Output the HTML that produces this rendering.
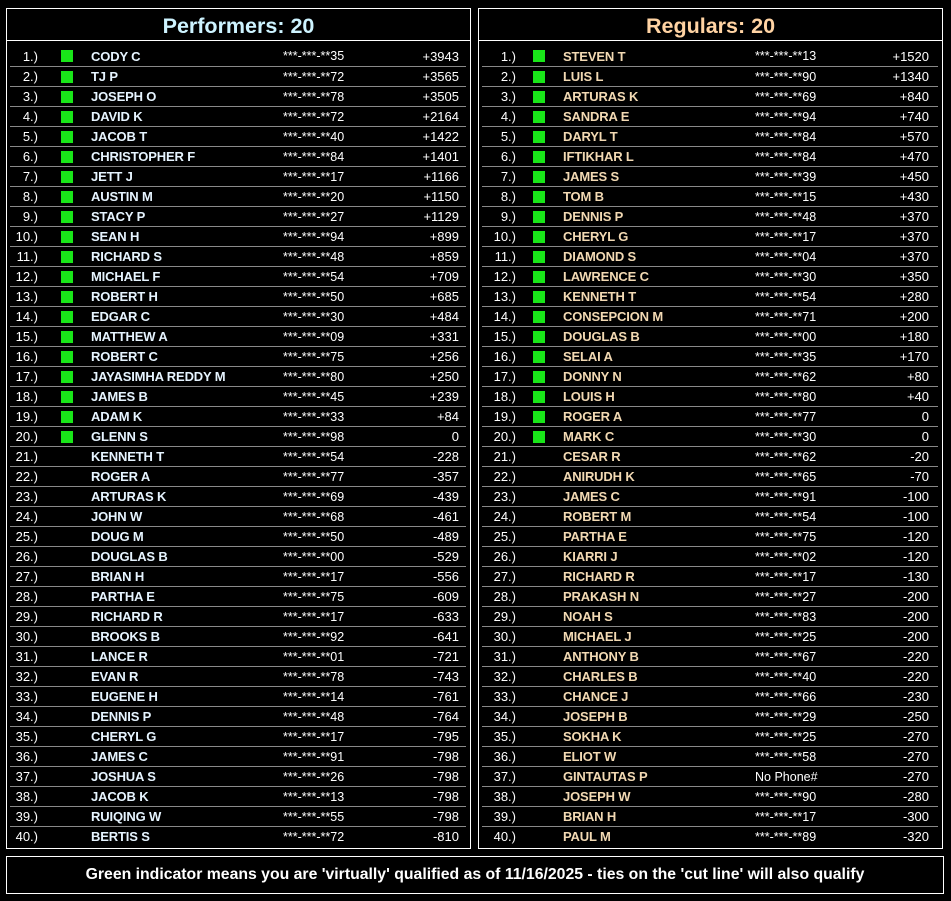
<!DOCTYPE html>
<html><head><meta charset="utf-8"><style>
*{margin:0;padding:0;box-sizing:border-box}
body{width:951px;height:901px;background:#000;position:relative;overflow:hidden;font-family:"Liberation Sans",Arial,sans-serif;color:#fff}
.p{position:absolute;top:8px;width:465px;height:841px;border:1px solid #fff}
.t{height:32px;border-bottom:1px solid #fff;text-align:center;font-weight:bold;font-size:21.5px;line-height:34px}
.rows{position:absolute;top:37px;left:3px;width:456px}
.r{height:20px;display:flex;align-items:center;font-size:13px;border-top:1px solid #888}
.r:first-child{border-top:none}
.n{width:30px;text-align:right;padding-right:2px}
.s{width:51px}
.s i{display:block;width:12px;height:12px;background:#19e619;margin-left:21px}
.m{width:192px;font-weight:bold;letter-spacing:-0.15px}
.ph{width:117px;font-size:12.5px}
.sc{width:62px;text-align:right;padding-right:3px}
#L{left:6px}#L .m{color:#e6f4ff}#L .t{color:#cdf3ff}
#R{left:478px}#R .m{color:#f2d9b3}#R .t{color:#ffd3a3}
#R .n{width:36px}#R .s{width:45px}#R .s i{margin-left:15px}#R .sc{width:62px;padding-right:5px}
.f{position:absolute;left:6px;top:856px;width:938px;height:38px;border:1px solid #fff;text-align:center;font-weight:bold;font-size:15.8px;line-height:36px}
</style></head><body>
<div class="p" id="L"><div class="t">Performers: 20</div><div class="rows">
<div class="r"><span class="n">1.)</span><span class="s"><i></i></span><span class="m">CODY C</span><span class="ph">***-***-**35</span><span class="sc">+3943</span></div>
<div class="r"><span class="n">2.)</span><span class="s"><i></i></span><span class="m">TJ P</span><span class="ph">***-***-**72</span><span class="sc">+3565</span></div>
<div class="r"><span class="n">3.)</span><span class="s"><i></i></span><span class="m">JOSEPH O</span><span class="ph">***-***-**78</span><span class="sc">+3505</span></div>
<div class="r"><span class="n">4.)</span><span class="s"><i></i></span><span class="m">DAVID K</span><span class="ph">***-***-**72</span><span class="sc">+2164</span></div>
<div class="r"><span class="n">5.)</span><span class="s"><i></i></span><span class="m">JACOB T</span><span class="ph">***-***-**40</span><span class="sc">+1422</span></div>
<div class="r"><span class="n">6.)</span><span class="s"><i></i></span><span class="m">CHRISTOPHER F</span><span class="ph">***-***-**84</span><span class="sc">+1401</span></div>
<div class="r"><span class="n">7.)</span><span class="s"><i></i></span><span class="m">JETT J</span><span class="ph">***-***-**17</span><span class="sc">+1166</span></div>
<div class="r"><span class="n">8.)</span><span class="s"><i></i></span><span class="m">AUSTIN M</span><span class="ph">***-***-**20</span><span class="sc">+1150</span></div>
<div class="r"><span class="n">9.)</span><span class="s"><i></i></span><span class="m">STACY P</span><span class="ph">***-***-**27</span><span class="sc">+1129</span></div>
<div class="r"><span class="n">10.)</span><span class="s"><i></i></span><span class="m">SEAN H</span><span class="ph">***-***-**94</span><span class="sc">+899</span></div>
<div class="r"><span class="n">11.)</span><span class="s"><i></i></span><span class="m">RICHARD S</span><span class="ph">***-***-**48</span><span class="sc">+859</span></div>
<div class="r"><span class="n">12.)</span><span class="s"><i></i></span><span class="m">MICHAEL F</span><span class="ph">***-***-**54</span><span class="sc">+709</span></div>
<div class="r"><span class="n">13.)</span><span class="s"><i></i></span><span class="m">ROBERT H</span><span class="ph">***-***-**50</span><span class="sc">+685</span></div>
<div class="r"><span class="n">14.)</span><span class="s"><i></i></span><span class="m">EDGAR C</span><span class="ph">***-***-**30</span><span class="sc">+484</span></div>
<div class="r"><span class="n">15.)</span><span class="s"><i></i></span><span class="m">MATTHEW A</span><span class="ph">***-***-**09</span><span class="sc">+331</span></div>
<div class="r"><span class="n">16.)</span><span class="s"><i></i></span><span class="m">ROBERT C</span><span class="ph">***-***-**75</span><span class="sc">+256</span></div>
<div class="r"><span class="n">17.)</span><span class="s"><i></i></span><span class="m">JAYASIMHA REDDY M</span><span class="ph">***-***-**80</span><span class="sc">+250</span></div>
<div class="r"><span class="n">18.)</span><span class="s"><i></i></span><span class="m">JAMES B</span><span class="ph">***-***-**45</span><span class="sc">+239</span></div>
<div class="r"><span class="n">19.)</span><span class="s"><i></i></span><span class="m">ADAM K</span><span class="ph">***-***-**33</span><span class="sc">+84</span></div>
<div class="r"><span class="n">20.)</span><span class="s"><i></i></span><span class="m">GLENN S</span><span class="ph">***-***-**98</span><span class="sc">0</span></div>
<div class="r"><span class="n">21.)</span><span class="s"></span><span class="m">KENNETH T</span><span class="ph">***-***-**54</span><span class="sc">-228</span></div>
<div class="r"><span class="n">22.)</span><span class="s"></span><span class="m">ROGER A</span><span class="ph">***-***-**77</span><span class="sc">-357</span></div>
<div class="r"><span class="n">23.)</span><span class="s"></span><span class="m">ARTURAS K</span><span class="ph">***-***-**69</span><span class="sc">-439</span></div>
<div class="r"><span class="n">24.)</span><span class="s"></span><span class="m">JOHN W</span><span class="ph">***-***-**68</span><span class="sc">-461</span></div>
<div class="r"><span class="n">25.)</span><span class="s"></span><span class="m">DOUG M</span><span class="ph">***-***-**50</span><span class="sc">-489</span></div>
<div class="r"><span class="n">26.)</span><span class="s"></span><span class="m">DOUGLAS B</span><span class="ph">***-***-**00</span><span class="sc">-529</span></div>
<div class="r"><span class="n">27.)</span><span class="s"></span><span class="m">BRIAN H</span><span class="ph">***-***-**17</span><span class="sc">-556</span></div>
<div class="r"><span class="n">28.)</span><span class="s"></span><span class="m">PARTHA E</span><span class="ph">***-***-**75</span><span class="sc">-609</span></div>
<div class="r"><span class="n">29.)</span><span class="s"></span><span class="m">RICHARD R</span><span class="ph">***-***-**17</span><span class="sc">-633</span></div>
<div class="r"><span class="n">30.)</span><span class="s"></span><span class="m">BROOKS B</span><span class="ph">***-***-**92</span><span class="sc">-641</span></div>
<div class="r"><span class="n">31.)</span><span class="s"></span><span class="m">LANCE R</span><span class="ph">***-***-**01</span><span class="sc">-721</span></div>
<div class="r"><span class="n">32.)</span><span class="s"></span><span class="m">EVAN R</span><span class="ph">***-***-**78</span><span class="sc">-743</span></div>
<div class="r"><span class="n">33.)</span><span class="s"></span><span class="m">EUGENE H</span><span class="ph">***-***-**14</span><span class="sc">-761</span></div>
<div class="r"><span class="n">34.)</span><span class="s"></span><span class="m">DENNIS P</span><span class="ph">***-***-**48</span><span class="sc">-764</span></div>
<div class="r"><span class="n">35.)</span><span class="s"></span><span class="m">CHERYL G</span><span class="ph">***-***-**17</span><span class="sc">-795</span></div>
<div class="r"><span class="n">36.)</span><span class="s"></span><span class="m">JAMES C</span><span class="ph">***-***-**91</span><span class="sc">-798</span></div>
<div class="r"><span class="n">37.)</span><span class="s"></span><span class="m">JOSHUA S</span><span class="ph">***-***-**26</span><span class="sc">-798</span></div>
<div class="r"><span class="n">38.)</span><span class="s"></span><span class="m">JACOB K</span><span class="ph">***-***-**13</span><span class="sc">-798</span></div>
<div class="r"><span class="n">39.)</span><span class="s"></span><span class="m">RUIQING W</span><span class="ph">***-***-**55</span><span class="sc">-798</span></div>
<div class="r"><span class="n">40.)</span><span class="s"></span><span class="m">BERTIS S</span><span class="ph">***-***-**72</span><span class="sc">-810</span></div>
</div></div>
<div class="p" id="R"><div class="t">Regulars: 20</div><div class="rows">
<div class="r"><span class="n">1.)</span><span class="s"><i></i></span><span class="m">STEVEN T</span><span class="ph">***-***-**13</span><span class="sc">+1520</span></div>
<div class="r"><span class="n">2.)</span><span class="s"><i></i></span><span class="m">LUIS L</span><span class="ph">***-***-**90</span><span class="sc">+1340</span></div>
<div class="r"><span class="n">3.)</span><span class="s"><i></i></span><span class="m">ARTURAS K</span><span class="ph">***-***-**69</span><span class="sc">+840</span></div>
<div class="r"><span class="n">4.)</span><span class="s"><i></i></span><span class="m">SANDRA E</span><span class="ph">***-***-**94</span><span class="sc">+740</span></div>
<div class="r"><span class="n">5.)</span><span class="s"><i></i></span><span class="m">DARYL T</span><span class="ph">***-***-**84</span><span class="sc">+570</span></div>
<div class="r"><span class="n">6.)</span><span class="s"><i></i></span><span class="m">IFTIKHAR L</span><span class="ph">***-***-**84</span><span class="sc">+470</span></div>
<div class="r"><span class="n">7.)</span><span class="s"><i></i></span><span class="m">JAMES S</span><span class="ph">***-***-**39</span><span class="sc">+450</span></div>
<div class="r"><span class="n">8.)</span><span class="s"><i></i></span><span class="m">TOM B</span><span class="ph">***-***-**15</span><span class="sc">+430</span></div>
<div class="r"><span class="n">9.)</span><span class="s"><i></i></span><span class="m">DENNIS P</span><span class="ph">***-***-**48</span><span class="sc">+370</span></div>
<div class="r"><span class="n">10.)</span><span class="s"><i></i></span><span class="m">CHERYL G</span><span class="ph">***-***-**17</span><span class="sc">+370</span></div>
<div class="r"><span class="n">11.)</span><span class="s"><i></i></span><span class="m">DIAMOND S</span><span class="ph">***-***-**04</span><span class="sc">+370</span></div>
<div class="r"><span class="n">12.)</span><span class="s"><i></i></span><span class="m">LAWRENCE C</span><span class="ph">***-***-**30</span><span class="sc">+350</span></div>
<div class="r"><span class="n">13.)</span><span class="s"><i></i></span><span class="m">KENNETH T</span><span class="ph">***-***-**54</span><span class="sc">+280</span></div>
<div class="r"><span class="n">14.)</span><span class="s"><i></i></span><span class="m">CONSEPCION M</span><span class="ph">***-***-**71</span><span class="sc">+200</span></div>
<div class="r"><span class="n">15.)</span><span class="s"><i></i></span><span class="m">DOUGLAS B</span><span class="ph">***-***-**00</span><span class="sc">+180</span></div>
<div class="r"><span class="n">16.)</span><span class="s"><i></i></span><span class="m">SELAI A</span><span class="ph">***-***-**35</span><span class="sc">+170</span></div>
<div class="r"><span class="n">17.)</span><span class="s"><i></i></span><span class="m">DONNY N</span><span class="ph">***-***-**62</span><span class="sc">+80</span></div>
<div class="r"><span class="n">18.)</span><span class="s"><i></i></span><span class="m">LOUIS H</span><span class="ph">***-***-**80</span><span class="sc">+40</span></div>
<div class="r"><span class="n">19.)</span><span class="s"><i></i></span><span class="m">ROGER A</span><span class="ph">***-***-**77</span><span class="sc">0</span></div>
<div class="r"><span class="n">20.)</span><span class="s"><i></i></span><span class="m">MARK C</span><span class="ph">***-***-**30</span><span class="sc">0</span></div>
<div class="r"><span class="n">21.)</span><span class="s"></span><span class="m">CESAR R</span><span class="ph">***-***-**62</span><span class="sc">-20</span></div>
<div class="r"><span class="n">22.)</span><span class="s"></span><span class="m">ANIRUDH K</span><span class="ph">***-***-**65</span><span class="sc">-70</span></div>
<div class="r"><span class="n">23.)</span><span class="s"></span><span class="m">JAMES C</span><span class="ph">***-***-**91</span><span class="sc">-100</span></div>
<div class="r"><span class="n">24.)</span><span class="s"></span><span class="m">ROBERT M</span><span class="ph">***-***-**54</span><span class="sc">-100</span></div>
<div class="r"><span class="n">25.)</span><span class="s"></span><span class="m">PARTHA E</span><span class="ph">***-***-**75</span><span class="sc">-120</span></div>
<div class="r"><span class="n">26.)</span><span class="s"></span><span class="m">KIARRI J</span><span class="ph">***-***-**02</span><span class="sc">-120</span></div>
<div class="r"><span class="n">27.)</span><span class="s"></span><span class="m">RICHARD R</span><span class="ph">***-***-**17</span><span class="sc">-130</span></div>
<div class="r"><span class="n">28.)</span><span class="s"></span><span class="m">PRAKASH N</span><span class="ph">***-***-**27</span><span class="sc">-200</span></div>
<div class="r"><span class="n">29.)</span><span class="s"></span><span class="m">NOAH S</span><span class="ph">***-***-**83</span><span class="sc">-200</span></div>
<div class="r"><span class="n">30.)</span><span class="s"></span><span class="m">MICHAEL J</span><span class="ph">***-***-**25</span><span class="sc">-200</span></div>
<div class="r"><span class="n">31.)</span><span class="s"></span><span class="m">ANTHONY B</span><span class="ph">***-***-**67</span><span class="sc">-220</span></div>
<div class="r"><span class="n">32.)</span><span class="s"></span><span class="m">CHARLES B</span><span class="ph">***-***-**40</span><span class="sc">-220</span></div>
<div class="r"><span class="n">33.)</span><span class="s"></span><span class="m">CHANCE J</span><span class="ph">***-***-**66</span><span class="sc">-230</span></div>
<div class="r"><span class="n">34.)</span><span class="s"></span><span class="m">JOSEPH B</span><span class="ph">***-***-**29</span><span class="sc">-250</span></div>
<div class="r"><span class="n">35.)</span><span class="s"></span><span class="m">SOKHA K</span><span class="ph">***-***-**25</span><span class="sc">-270</span></div>
<div class="r"><span class="n">36.)</span><span class="s"></span><span class="m">ELIOT W</span><span class="ph">***-***-**58</span><span class="sc">-270</span></div>
<div class="r"><span class="n">37.)</span><span class="s"></span><span class="m">GINTAUTAS P</span><span class="ph">No Phone#</span><span class="sc">-270</span></div>
<div class="r"><span class="n">38.)</span><span class="s"></span><span class="m">JOSEPH W</span><span class="ph">***-***-**90</span><span class="sc">-280</span></div>
<div class="r"><span class="n">39.)</span><span class="s"></span><span class="m">BRIAN H</span><span class="ph">***-***-**17</span><span class="sc">-300</span></div>
<div class="r"><span class="n">40.)</span><span class="s"></span><span class="m">PAUL M</span><span class="ph">***-***-**89</span><span class="sc">-320</span></div>
</div></div>
<div class="f">Green indicator means you are 'virtually' qualified as of 11/16/2025 - ties on the 'cut line' will also qualify</div>
</body></html>
